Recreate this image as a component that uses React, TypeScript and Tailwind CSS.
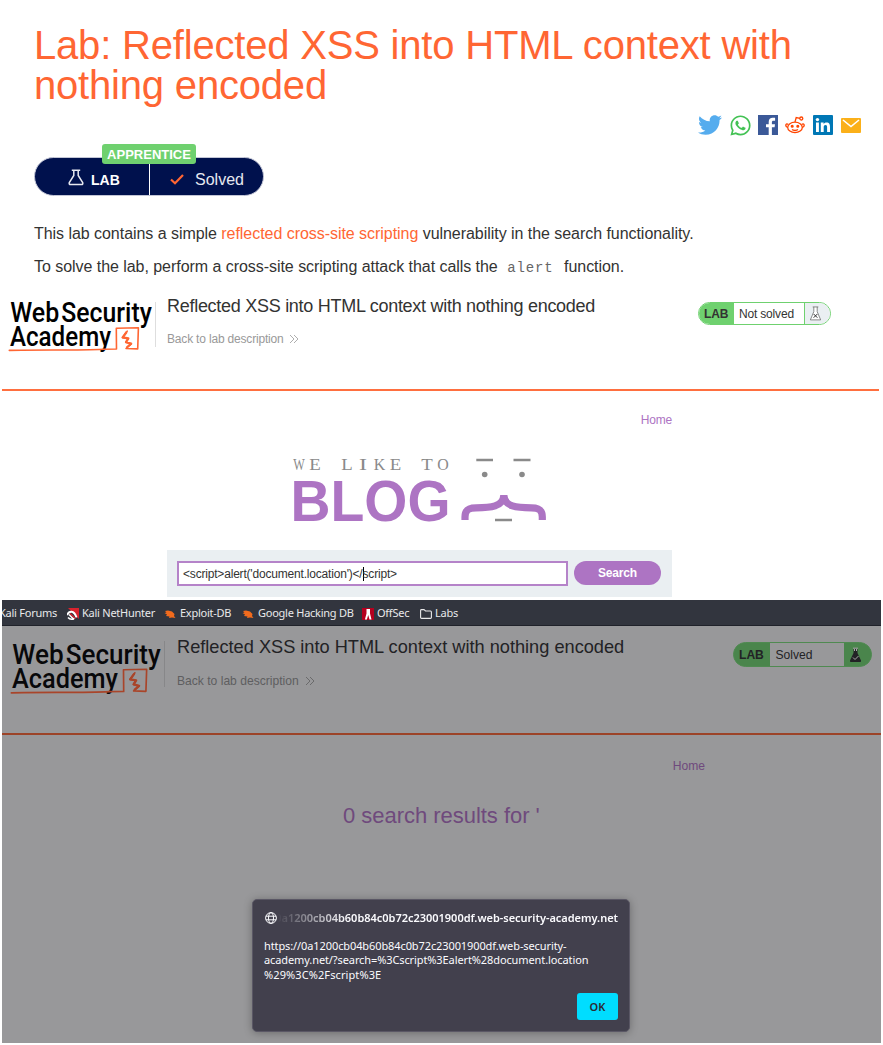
import React from "react";
import { FaTwitter, FaWhatsapp } from "react-icons/fa";

const sans = "font-['Liberation_Sans',Arial,sans-serif]";
const noto = "font-['Noto_Sans',sans-serif]";

function AcademyLogo({ ink, accent, className }: { ink: string; accent: string; className: string }) {
  return (
    <svg viewBox="0 0 146 56" className={className} fill="none">
      <g fill={ink} fontFamily="Roboto, sans-serif" fontWeight="500" fontSize="27">
        <text x="2.2" y="24.4" textLength="49" lengthAdjust="spacingAndGlyphs">Web</text>
        <text x="53.3" y="24.4" textLength="90.5" lengthAdjust="spacingAndGlyphs">Security</text>
        <text x="2" y="48" textLength="101" lengthAdjust="spacingAndGlyphs">Academy</text>
      </g>
      <path
        d="M1.3 52.4C30 51.4 70 52.6 95 51.2L108.5 51L108.3 30.3L130.4 29.8L129.7 50.9L118 50.5L123.2 45.8L117.8 44.3L120 40.6L114.3 39.6L119.2 33.2"
        stroke={accent}
        strokeWidth="1.6"
        strokeLinejoin="round"
        strokeLinecap="round"
      />
      <path d="M118.600 34L114.800 39.400L120.400 40.400L118 44.200L123.200 45.600L118.500 49.800" stroke={accent} strokeWidth="2.200" strokeLinejoin="round" />
    </svg>
  );
}

function Chevrons({ className }: { className: string }) {
  return (
    <svg viewBox="0 0 10 10" className={className} fill="none" stroke="currentColor" strokeWidth="0.8">
      <path d="M1 1L5 5L1 9M5 1L9 5L5 9" />
    </svg>
  );
}

function SocialIcons() {
  return (
    <div className="flex h-[22px] items-center">
      <FaTwitter className="h-[24px] w-[24px] text-[#55acee]" />
      <FaWhatsapp className="ml-[7px] h-[23px] w-[23px] text-[#43c254]" />
      <svg viewBox="0 0 20 20" className="ml-[6px] h-5 w-5">
        <path fill="#3b5998" d="M0 0h20v20H0z" />
        <path fill="#fff" d="M10.7 20v-7.7H8V9.2h2.7V6.900c0-2.700 1.600-4.100 4-4.100 1.200 0 2.200.1 2.400.1v2.800h-1.600c-1.300 0-1.600.6-1.600 1.500v2h3.100l-.4 3.100h-2.700V20z" />
      </svg>
      <svg viewBox="0 0 20 20" className="ml-[7px] h-5 w-5" fill="none" stroke="#ff4500" strokeWidth="1.3">
        <ellipse cx="10" cy="12.400" rx="7.300" ry="5.200" />
        <path d="M10 7L11.200 2.500L15 3.400M3.400 9.600C.8 7.300-.4 11.300 2.700 12.500M16.600 9.600C19.200 7.300 20.400 11.300 17.300 12.500M7 14.500C8.500 15.800 11.500 15.800 13 14.500" />
        <circle cx="16.300" cy="3.500" r="1.500" />
        <circle cx="7.200" cy="11.200" r=".9" fill="#ff4500" />
        <circle cx="12.800" cy="11.200" r=".9" fill="#ff4500" />
      </svg>
      <svg viewBox="0 0 20 20" className="ml-2 h-5 w-5">
        <rect width="20" height="20" rx="1" fill="#0077b5" />
        <path fill="#fff" d="M3 7.600h2.900V17H3zM7.800 7.600h2.800v1.300c.5-.9 1.500-1.500 2.900-1.500 2.900 0 3.500 1.900 3.500 4.500V17h-2.900v-4.600c0-1.200-.1-2.500-1.600-2.500s-1.800 1.200-1.800 2.500V17H7.800z" />
        <circle cx="4.450" cy="4.600" r="1.700" fill="#fff" />
      </svg>
      <svg viewBox="0 0 20 15" className="ml-2 h-[15px] w-5">
        <rect width="20" height="15" rx="1" fill="#fbb019" />
        <path d="M2 2L10 8.500L18 2" fill="none" stroke="#fff" strokeWidth="1.600" />
      </svg>
    </div>
  );
}

function Description() {
  return (
    <section className="h-[290px] pl-[34px] pr-[22px] pt-[25px]">
      <h1 className="text-[40px] leading-[40px] tracking-[-0.19px] text-[#ff6633]">
        Lab: Reflected XSS into HTML context with
        <br />
        nothing encoded
      </h1>
      <div className="mt-[9px] flex justify-end">
        <SocialIcons />
      </div>
      <div className="relative mt-[21px] flex h-[39px] w-[230px] items-center rounded-full border border-[#c3c6d6] bg-[#00114d] text-white">
        <div className="flex h-full w-[115px] items-center border-r border-white pl-[33px] pt-[6px]">
          <svg viewBox="0 0 16 17" className="-mt-[5px] h-[17px] w-4" fill="none" stroke="#e6e8f0" strokeWidth="1.500">
            <path d="M3.800 1.200H12.200M5.800 1.200V6.500L1.300 13.500Q.7 15.500 2.600 15.500H13.400Q15.300 15.500 14.700 13.500L10.200 6.500V1.200" />
          </svg>
          <span className="ml-[7px] text-[14px] font-bold leading-4">LAB</span>
        </div>
        <div className="flex h-full items-center pl-5 pt-[6px]">
          <svg viewBox="0 0 14 11" className="h-[11px] w-[14px]" fill="none" stroke="#ff6633" strokeWidth="2.200">
            <path d="M1 5.500L5 9.300L13 1" />
          </svg>
          <span className="ml-[11px] text-[16px] leading-5 text-[#e6e8f0]">Solved</span>
        </div>
        <span className="absolute -top-[14px] left-[67px] h-5 w-[94px] rounded-[3px] bg-[#6fd16f] text-center text-[13px] font-bold leading-[21px]">
          APPRENTICE
        </span>
      </div>
      <p className="mt-[28px] text-[16px] leading-5 tracking-[-0.045px] text-[#333332]">
        This lab contains a simple <span className="text-[#ff6633]">reflected cross-site scripting</span> vulnerability in
        the search functionality.
      </p>
      <p className="mt-[13px] text-[16px] leading-5 tracking-[-0.045px] text-[#333332]">
        To solve the lab, perform a cross-site scripting attack that calls the{" "}
        <code className="ml-[5px] mr-[6px] font-['Liberation_Mono',monospace] text-[14px] tracking-[0.9px] text-[#666666]">alert</code>{" "}
        function.
      </p>
    </section>
  );
}

const tagline: [string, number][] = [
  ["W", 299],
  ["E", 315],
  ["L", 347],
  ["I", 363],
  ["K", 379.5],
  ["E", 395.5],
  ["T", 427],
  ["O", 443],
];

function BlogLogo() {
  return (
    <svg viewBox="290 450 260 78" className="h-[78px] w-[260px]" fill="none">
      <g fill="#8a8a8a" fontFamily="Liberation Serif, serif" fontSize="17" textAnchor="middle">
        {tagline.map(([letter, x]) => (
          <text key={x} x={x} y="470" textLength={letter === "I" ? 8 : 11.5} lengthAdjust="spacingAndGlyphs">
            {letter}
          </text>
        ))}
      </g>
      <text
        x="290.500"
        y="521"
        fill="#ad74c3"
        fontFamily="Liberation Sans, sans-serif"
        fontWeight="700"
        fontSize="57"
        textLength="160"
        lengthAdjust="spacingAndGlyphs"
      >
        BLOG
      </text>
      <path d="M476.300 460H493M513.500 460H530.500M495 520H512" stroke="#8a8a8a" strokeWidth="2.600" />
      <circle cx="484.700" cy="474.500" r="2.800" fill="#8a8a8a" />
      <circle cx="522" cy="474.500" r="2.800" fill="#8a8a8a" />
      <path
        d="M465 520V517C465 509.500 469 507.800 476 507.800C490 507.800 503.500 507 503.800 495C504 507 517.500 507.800 531.500 507.800C538.500 507.800 542.300 509.500 542.300 517V520"
        stroke="#ad74c3"
        strokeWidth="7.200"
      />
    </svg>
  );
}

function UnsolvedLab() {
  return (
    <section className="h-[310px]">
      <header className="flex h-[98px] pl-2 pt-2">
        <AcademyLogo ink="#000000" accent="#ff6633" className="h-14 w-[146px] shrink-0" />
        <div className="ml-px mt-1 h-[45px] w-px bg-[#dedede]" />
        <div className="-mt-[2px] ml-[11px] w-[531px]">
          <h2 className="text-[18px] leading-5 tracking-[-0.28px] text-[#333332]">
            Reflected XSS into HTML context with nothing encoded
          </h2>
          <a className="mt-[15px] flex items-center text-[12px] leading-4 tracking-[-0.18px] text-[#999999]">
            Back to lab description
            <Chevrons className="ml-[5px] h-[10px] w-[10px]" />
          </a>
        </div>
        <div className="mt-1 flex h-[23px] w-[133px] items-stretch overflow-hidden rounded-full border border-[#6fd16f] text-[12px] leading-[22px] tracking-[-0.18px] text-[#333332]">
          <span className="w-[35px] bg-[#6fd16f] pl-[5px] font-bold leading-[23px]">LAB</span>
          <span className="w-[71px] border-r border-[#6fd16f] pl-[5px]">Not solved</span>
          <span className="flex-1 bg-[#eaeff2] pl-1 pt-[3px]">
            <svg viewBox="0 0 13 16" className="h-[15px] w-[13px]" fill="none" stroke="#666" strokeWidth="0.800">
              <path d="M3.500 1H9.500M4.700 1V6L1 14.800H12L8.300 6V1" fill="#fff" />
              <path d="M4.500 8.500L8.500 12.500M8.500 8.500L4.500 12.500" stroke="#222" strokeWidth="1" />
            </svg>
          </span>
        </div>
      </header>
      <div className="ml-[2px] mr-1 mt-px h-[2px] bg-[#ff6f3f]" />
      <div className="ml-[167px] w-[505px]">
        <div className="pt-[21px] text-right text-[12px] leading-4 tracking-[-0.18px] text-[#ad74c3]">Home</div>
        <div className="ml-[123px] mt-[22px]">
          <BlogLogo />
        </div>
        <div className="mt-[22px] flex h-[47px] bg-[#eaeff2] pl-[10px] pt-[11px]">
          <div className="flex h-[25px] w-[391px] items-center border-2 border-[#b583c9] bg-white pl-[4px] text-[12px] leading-5 tracking-[-0.19px] text-[#333332]">
            <span>&lt;script&gt;alert('document.location')&lt;/</span>
            <span className="h-[14px] w-px bg-black" />
            <span className="-ml-px">script&gt;</span>
          </div>
          <div className="ml-[6px] h-6 w-[87px] rounded-full bg-[#ad74c3] text-center text-[12px] font-bold leading-[25px] tracking-[-0.18px] text-white">
            Search
          </div>
        </div>
      </div>
    </section>
  );
}

function BugIcon() {
  return (
    <svg viewBox="0 0 12 10" className="h-[10px] w-3">
      <path d="M1 2L4 1.500L8 2.500L10.500 5L10 7L11.500 9L8 8.500L5 9L5.500 7.500L2 7L3 5.500L.5 4L2.500 3.500Z" fill="#f26b1d" />
    </svg>
  );
}

function BookmarkBar() {
  return (
    <nav
      className={`mx-[2px] flex h-[26px] items-center overflow-hidden border-b border-[#20222a] bg-[#32353e] pt-[2px] text-[11px] tracking-[-0.25px] text-[#e9e9ea] ${noto}`}
    >
      <span className="-ml-[3px] w-[59px] whitespace-nowrap">Kali Forums</span>
      <svg viewBox="0 0 12 12" className="ml-[9px] h-3 w-3">
        <path d="M1 0H12V11Z" fill="#d9232e" />
        <path d="M0 7C2 2.500 7 2 9.500 9.500" fill="none" stroke="#fff" strokeWidth="2" />
        <path d="M2 6.500L7 11.500M1 9.500C3 12 6 11.500 7.500 10" fill="none" stroke="#fff" strokeWidth="1.500" />
        <path d="M3 5.500L8.500 10.500" stroke="#d9232e" strokeWidth="1.300" />
      </svg>
      <span className="ml-[3px] w-[75px] whitespace-nowrap">Kali NetHunter</span>
      <span className="ml-[7px]"><BugIcon /></span>
      <span className="ml-[4px] w-[56px] whitespace-nowrap">Exploit-DB</span>
      <span className="ml-[6px]"><BugIcon /></span>
      <span className="ml-[4px] w-[97px] whitespace-nowrap">Google Hacking DB</span>
      <svg viewBox="0 0 12 12" className="ml-[7px] h-3 w-3">
        <path d="M0 0H12V12H0Z" fill="#b5001f" />
        <path d="M4.500 1H8V5.500L9.500 11.500H7.500L6.200 7L4.900 11.500H2.900L4.500 5.500Z" fill="#fff" />
      </svg>
      <span className="ml-[3px] w-[35px] whitespace-nowrap">OffSec</span>
      <svg viewBox="0 0 12 10" className="ml-2 h-[10px] w-3" fill="none" stroke="#e9e9ea" strokeWidth="1.100">
        <path d="M.6 1.500Q.6.600 1.500.600H4L5.500 2H10.500Q11.400 2 11.400 3V8.500Q11.400 9.400 10.500 9.400H1.500Q.6 9.400.6 8.500Z" />
      </svg>
      <span className="ml-[3px]">Labs</span>
    </nav>
  );
}

function AlertDialog() {
  return (
    <div
      className={`absolute left-[250px] top-[273px] h-[133px] w-[378px] rounded-[5px] border border-[#5a5765] bg-[#42404d] px-[11px] text-[#fbfbfe] shadow-[0_1px_8px_rgba(0,0,0,0.3)] ${noto}`}
    >
      <div className="mt-[10px] flex h-4 items-center">
        <svg viewBox="0 0 12 12" className="ml-px h-3 w-3 shrink-0" fill="none" stroke="#fbfbfe" strokeWidth="1">
          <circle cx="6" cy="6" r="5.400" />
          <ellipse cx="6" cy="6" rx="2.500" ry="5.400" />
          <path d="M1 4.200H11M1 7.800H11" />
        </svg>
        <div className="flex h-4 flex-1 justify-end overflow-hidden whitespace-nowrap pl-1 text-[11px] font-semibold leading-4 tracking-[-0.02px] [mask-image:linear-gradient(to_right,transparent,black_70px)]">
          0a1200cb04b60b84c0b72c23001900df.web-security-academy.net
        </div>
      </div>
      <p className="mt-[13px] text-[11px] leading-[14.300px] tracking-[-0.1px]">
        https://0a1200cb04b60b84c0b72c23001900df.web-security-
        <br />
        academy.net/?search=%3Cscript%3Ealert%28document.location
        <br />
        <span className="tracking-[0.1px]">%29%3C%2Fscript%3E</span>
      </p>
      <button className="absolute bottom-[11px] right-[11px] h-[27px] w-[41px] rounded-[3px] bg-[#00ddff] text-[11px] font-semibold leading-[27px] text-[#2b2a33]">
        OK
      </button>
    </div>
  );
}

function SolvedLab() {
  return (
    <section className="relative mx-[2px] h-[417px] bg-[#98989a]">
      <header className="flex h-[107px] pl-[7.500px] pt-[11.500px]">
        <AcademyLogo ink="#08080a" accent="#a9452a" className="h-[58.700px] w-[153px] shrink-0" />
        <div className="ml-[1.500px] mt-[3.500px] h-[46px] w-px bg-[#878789]" />
        <div className="-mt-[0.500px] ml-[12px] w-[556px]">
          <h2 className="text-[18.200px] leading-5 text-[#222225]">Reflected XSS into HTML context with nothing encoded</h2>
          <a className="mt-[16px] flex items-center text-[12.100px] leading-4 text-[#5e5e60]">
            Back to lab description
            <Chevrons className="ml-[6px] h-[10px] w-[10px]" />
          </a>
        </div>
        <div className="mt-[4.500px] flex h-[25px] w-[139px] items-stretch overflow-hidden rounded-full border border-[#4f8a51] bg-[#4a854c] text-[12.100px] leading-[25px] text-[#222225]">
          <span className="w-9 pl-[5px] font-bold">LAB</span>
          <span className="w-[74px] bg-[#98989a] pl-[5.500px] leading-6">Solved</span>
          <span className="pl-[5px] pt-1">
            <svg viewBox="0 0 13 16" className="h-4 w-[13px]">
              <path d="M4.500 1.500V6L1 13.500Q.6 15 2 15H11Q12.400 15 12 13.500L8.500 6V1.500Z" fill="#222225" />
              <path d="M4 1.200H9M5.500 2V4M7.500 2V4M4 10.500L6 12.500L9.500 9" fill="none" stroke="#aaa" strokeWidth="1" />
            </svg>
          </span>
        </div>
      </header>
      <div className="h-[2px] bg-[#9c4328]" />
      <div className="pr-[176px] pt-[23px] text-right text-[12.100px] leading-4 text-[#6f4a7d]">Home</div>
      <h1 className="ml-[341px] mt-[28px] text-[22px] leading-7 tracking-[-0.03px] text-[#6f4a7d]">0 search results for '</h1>
      <AlertDialog />
    </section>
  );
}

export default function App() {
  return (
    <main className={`h-[1045px] w-[883px] overflow-hidden bg-white ${sans}`}>
      <Description />
      <UnsolvedLab />
      <BookmarkBar />
      <SolvedLab />
    </main>
  );
}
